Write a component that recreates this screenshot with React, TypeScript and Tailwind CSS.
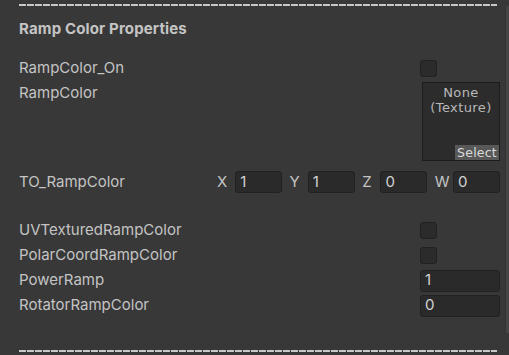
import React from "react";

const Dashes = () => (
  <div className="h-[2px] w-[478px] bg-[repeating-linear-gradient(90deg,#c8c8c8_0px,#c8c8c8_7px,transparent_7px,transparent_8px)]" />
);

const Checkbox = () => (
  <div className="w-[17px] h-[17px] rounded-[3px] bg-[#2b2b2b] border border-[#212121]" />
);

const Field = ({ value, className }: { value: string; className: string }) => (
  <div
    className={
      "h-[22px] rounded-[3px] bg-[#2a2a2a] border border-[#212121] flex items-center pl-[4px] text-[15px] text-[#d2d2d2] " +
      className
    }
  >
    {value}
  </div>
);

const Label = ({ children }: { children: React.ReactNode }) => (
  <div className="w-[401px] shrink-0 h-[22px] flex items-center text-[15px] text-[#c4c4c4]">{children}</div>
);

export default function App() {
  const vec = [
    ["X", "1"],
    ["Y", "1"],
    ["Z", "0"],
    ["W", "0"],
  ];
  return (
    <div
      className="w-[509px] h-[355px] bg-[#383838] flex overflow-hidden"
      style={{ fontFamily: "Inter, 'Noto Sans', sans-serif" }}
    >
      <div className="w-[505px] shrink-0 pl-[19px] pt-[4px] flex flex-col">
        <Dashes />
        <div className="mt-[13px] h-[20px] flex items-center text-[15px] font-bold tracking-[0.15px] text-[#c4c4c4]">
          Ramp Color Properties
        </div>
        <div className="mt-[18px] flex items-center">
          <Label>RampColor_On</Label>
          <Checkbox />
        </div>
        <div className="mt-[3px] flex items-start">
          <Label>RampColor</Label>
          <div
            className="relative ml-[2px] w-[78px] h-[79px] bg-[#2c2c2c] border border-[#1c1c1c] flex flex-col items-center pt-[2px] text-[13px] leading-[15px] tracking-[0.4px] text-[#b8b8b8]"
            style={{ fontFamily: "'DejaVu Sans', 'Liberation Sans', sans-serif" }}
          >
            <span>None</span>
            <span>(Texture)</span>
            <div className="absolute right-0 bottom-0 w-[44px] h-[15px] bg-[#585858] text-[#dadada] text-[12.5px] leading-[15px] tracking-[0.2px] flex items-center justify-center">
              Select
            </div>
          </div>
        </div>
        <div className="mt-[10px] flex items-center">
          <div className="w-[198px] shrink-0 h-[22px] flex items-center text-[15px] text-[#c4c4c4]">
            TO_RampColor
          </div>
          <div className="w-[283px] grid grid-cols-4 gap-x-[7.3px]">
            {vec.map(([l, v]) => (
              <div key={l} className="flex items-center">
                <span className="flex-1 text-[15px] text-[#c4c4c4]">{l}</span>
                <Field value={v} className="w-[47px]" />
              </div>
            ))}
          </div>
        </div>
        <div className="mt-[26px] flex flex-col gap-[3px]">
          <div className="flex items-center">
            <Label>UVTexturedRampColor</Label>
            <Checkbox />
          </div>
          <div className="flex items-center">
            <Label>PolarCoordRampColor</Label>
            <Checkbox />
          </div>
          <div className="flex items-center">
            <Label>PowerRamp</Label>
            <Field value="1" className="w-[80px]" />
          </div>
          <div className="flex items-center">
            <Label>RotatorRampColor</Label>
            <Field value="0" className="w-[80px]" />
          </div>
        </div>
        <div className="mt-[33px]">
          <Dashes />
        </div>
      </div>
      <div className="w-[4px] shrink-0 flex flex-col">
        <div className="h-[6px]" />
        <div className="h-[327px] border-l border-[#333333] bg-[#464646]" />
      </div>
    </div>
  );
}
